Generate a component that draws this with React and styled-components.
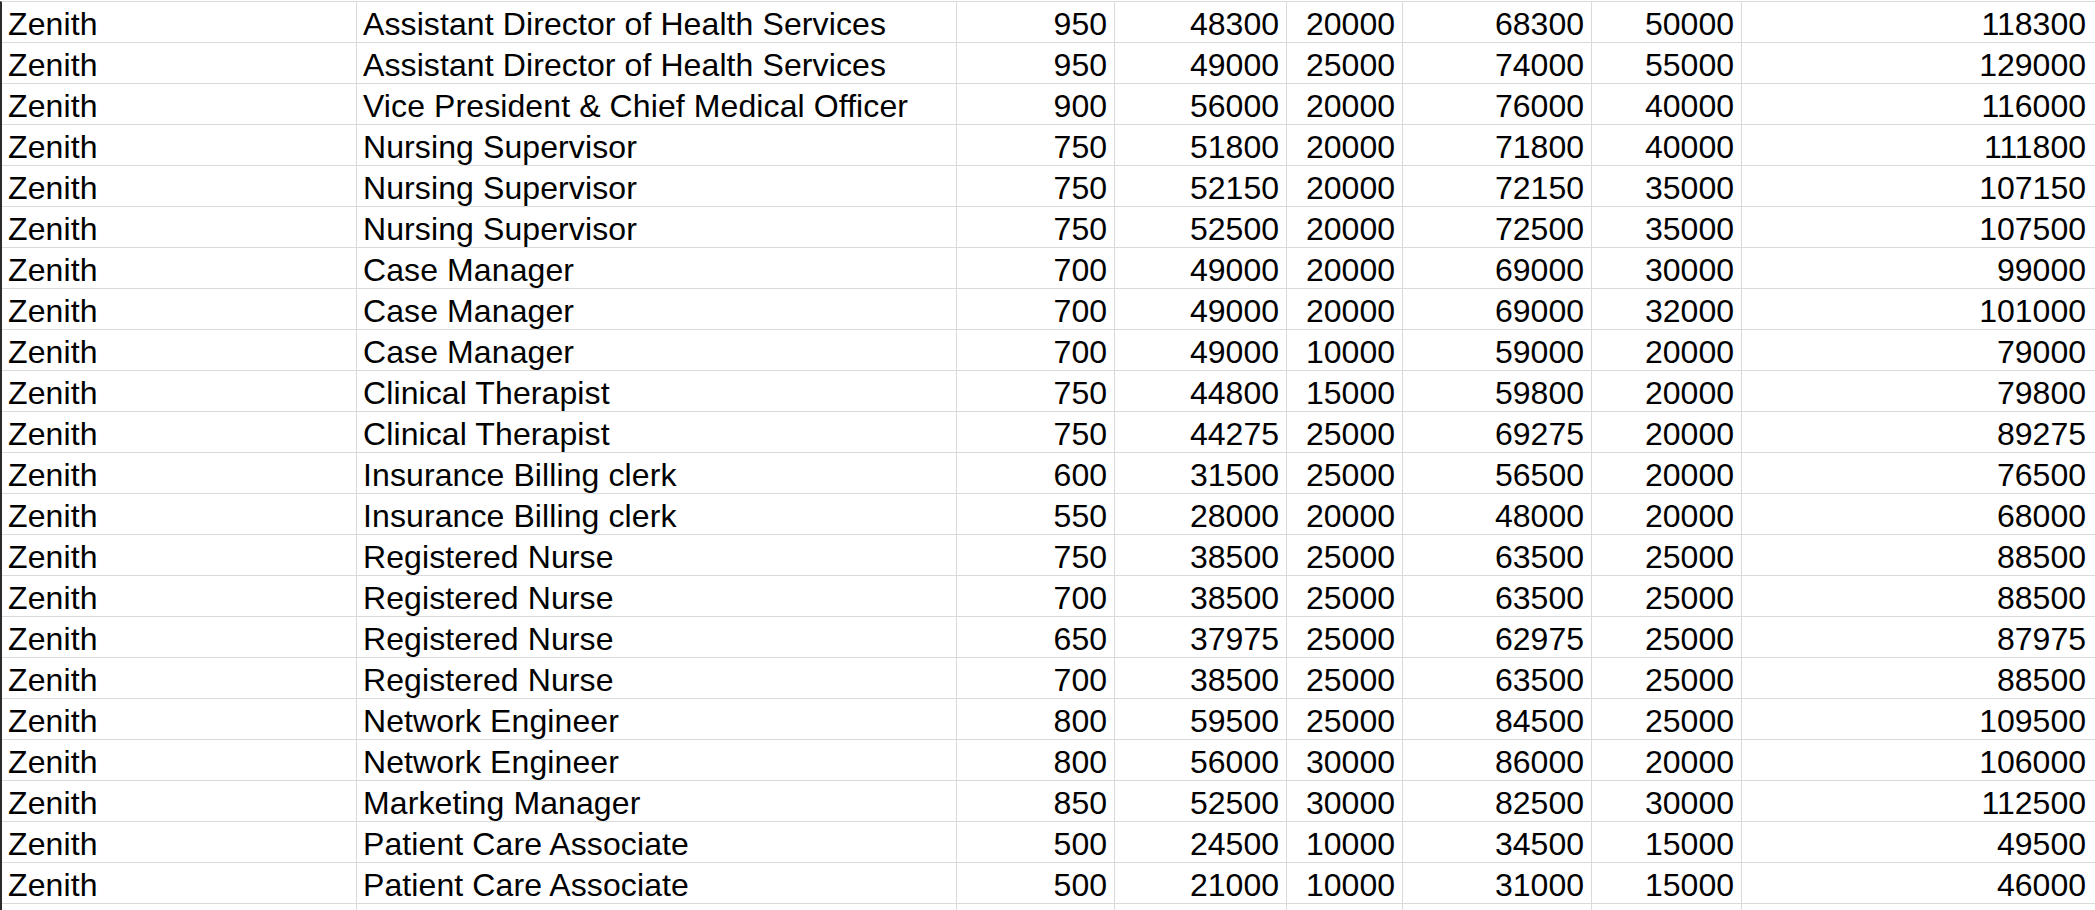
import React from 'react';
import styled, { createGlobalStyle } from 'styled-components';

const GlobalStyle = createGlobalStyle`
  html, body {
    margin: 0;
    padding: 0;
    background: #ffffff;
    overflow: hidden;
  }
`;

// column widths include the 1px gridline on the right edge
const COLUMNS = '355px 600px 158px 172px 116px 189px 150px 1fr';

const Sheet = styled.div`
  padding-top: 1px;
  width: 2095px;
  height: 910px;
  overflow: hidden;
  box-sizing: border-box;
  background: #ffffff;
  font-family: "Liberation Sans", Arial, sans-serif;
  font-size: 32px;
  color: #000000;
`;

const Grid = styled.div`
  border-top: 1px solid #dadada;
  border-left: 2px solid #2b2b2b;
`;

const Row = styled.div`
  display: grid;
  grid-template-columns: ${COLUMNS};
  height: 41px;
  box-sizing: border-box;
  border-bottom: 1px solid #dadada;
`;

const Cell = styled.div`
  display: flex;
  align-items: flex-end;
  justify-content: ${props => (props.$num ? 'flex-end' : 'flex-start')};
  height: 40px;
  line-height: 36px;
  padding: ${props => (props.$num ? `0 ${props.$padRight || 7}px 0 0` : '0 0 0 6px')};
  letter-spacing: ${props => (props.$num ? '0' : '0.1px')};
  box-sizing: border-box;
  border-right: ${props => (props.$last ? 'none' : '1px solid #dadada')};
  white-space: nowrap;
  overflow: hidden;
`;

const rows = [
  ['Assistant Director of Health Services', 950, 48300, 20000, 68300, 50000, 118300],
  ['Assistant Director of Health Services', 950, 49000, 25000, 74000, 55000, 129000],
  ['Vice President & Chief Medical Officer', 900, 56000, 20000, 76000, 40000, 116000],
  ['Nursing Supervisor', 750, 51800, 20000, 71800, 40000, 111800],
  ['Nursing Supervisor', 750, 52150, 20000, 72150, 35000, 107150],
  ['Nursing Supervisor', 750, 52500, 20000, 72500, 35000, 107500],
  ['Case Manager', 700, 49000, 20000, 69000, 30000, 99000],
  ['Case Manager', 700, 49000, 20000, 69000, 32000, 101000],
  ['Case Manager', 700, 49000, 10000, 59000, 20000, 79000],
  ['Clinical Therapist', 750, 44800, 15000, 59800, 20000, 79800],
  ['Clinical Therapist', 750, 44275, 25000, 69275, 20000, 89275],
  ['Insurance Billing clerk', 600, 31500, 25000, 56500, 20000, 76500],
  ['Insurance Billing clerk', 550, 28000, 20000, 48000, 20000, 68000],
  ['Registered Nurse', 750, 38500, 25000, 63500, 25000, 88500],
  ['Registered Nurse', 700, 38500, 25000, 63500, 25000, 88500],
  ['Registered Nurse', 650, 37975, 25000, 62975, 25000, 87975],
  ['Registered Nurse', 700, 38500, 25000, 63500, 25000, 88500],
  ['Network Engineer', 800, 59500, 25000, 84500, 25000, 109500],
  ['Network Engineer', 800, 56000, 30000, 86000, 20000, 106000],
  ['Marketing Manager', 850, 52500, 30000, 82500, 30000, 112500],
  ['Patient Care Associate', 500, 24500, 10000, 34500, 15000, 49500],
  ['Patient Care Associate', 500, 21000, 10000, 31000, 15000, 46000],
];

function DataRow({ cells, company = 'Zenith' }) {
  const [title, ...nums] = cells;
  return (
    <Row>
      <Cell>{company}</Cell>
      <Cell>{title}</Cell>
      {nums.map((n, i) => (
        <Cell key={i} $num $last={i === nums.length - 1} $padRight={i === nums.length - 1 ? 9 : 7}>
          {n}
        </Cell>
      ))}
    </Row>
  );
}

export default function App() {
  return (
    <>
      <GlobalStyle />
      <Sheet>
        <Grid>
          {rows.map((r, i) => (
            <DataRow key={i} cells={r} />
          ))}
          {/* partially visible next row, its text falls below the window */}
          <DataRow company="" cells={['', '', '', '', '', '', '']} />
        </Grid>
      </Sheet>
    </>
  );
}
